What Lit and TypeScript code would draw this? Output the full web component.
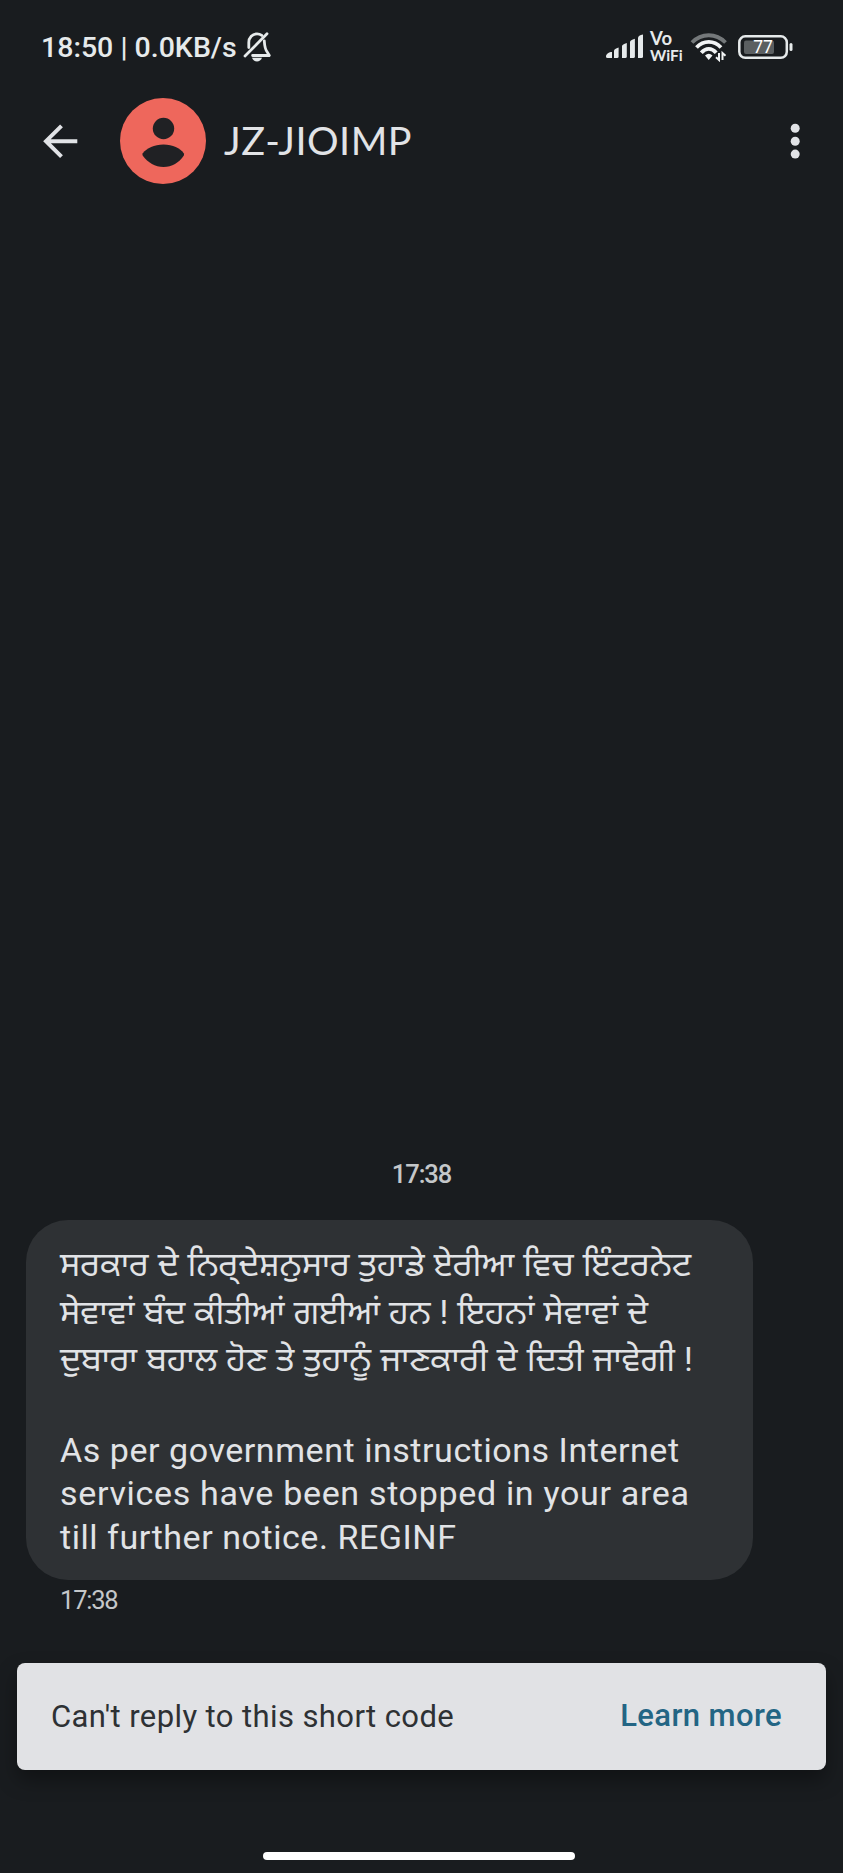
import { LitElement, html, css, svg } from "lit";
import { customElement } from "lit/decorators.js";

@customElement("status-bar")
class StatusBar extends LitElement {
  static styles = css`
    :host {
      display: flex;
      align-items: center;
      height: 94px;
      padding: 0 50px 0 41px;
      box-sizing: border-box;
      font: 500 28.5px/32px Roboto, sans-serif;
      color: #e6eaeb;
      white-space: nowrap;
    }
    .clock { width: 202px; padding-top: 1px; }
    .bell { width: 28px; height: 30px; }
    .icons { margin-left: auto; display: flex; align-items: center; }
    .signal { width: 38px; height: 26px; }
    .vo { margin-left: 6px; width: 34px; font: 700 15.500px/16px Lato, sans-serif; height: 33px; }
    .vo div { height: 17px; }
    .vo .top { font-size: 18.500px; height: 16px; line-height: 14px; }
    .wifi { margin-left: 6px; width: 38px; height: 30px; }
    .battery { margin-left: 10px; width: 55px; height: 26px; }
  `;
  render() {
    return html`
      <div class="clock">18:50 | 0.0KB/s</div>
      <svg class="bell" viewBox="0 0 28 30" fill="none" stroke="#e6eaeb" stroke-width="2.8" stroke-linecap="round">
        <path d="M2 24 24 1.800" />
        <path d="M5.800 15.500V10.500C5.800 5.500 9.500 1.800 14 1.800c1.800 0 3.400.6 4.800 1.600" />
        <path d="M21.300 8.800c.3 5 .3 8 3 11.300l2 3.400H9.600" stroke-linejoin="round" />
        <path d="M9 25.800h10c-1 2.600-2.800 3.700-5 3.700s-4-1.100-5-3.700Z" fill="#e6eaeb" stroke="none" />
      </svg>
      <div class="icons">
        <svg class="signal" viewBox="0 0 38 26" fill="#e6eaeb">
          <path d="M6 18V24H1.500Q0 24 0 22.500C0 20 3 18 6 18Z" />
          <path d="M8 24V16.500Q8.200 14.800 12.600 13.500V22.500Q12.600 24 11.100 24Z" />
          <path d="M16 24V12Q16.200 10.300 20.800 9V22.500Q20.800 24 19.300 24Z" />
          <path d="M24 24V8Q24.200 6 28.900 4.800V22.500Q28.900 24 27.400 24Z" />
          <path d="M32 24V3.800Q32.200 1.500 37 .5V22.500Q37 24 35.500 24Z" />
        </svg>
        <div class="vo"><div class="top">Vo</div><div>WiFi</div></div>
        <svg class="wifi" viewBox="0 0 38 30" fill="none" stroke="#f1f3f4" stroke-width="3.800">
          <path d="M2 10.500C11.500.8 26 .8 35.500 10.500" stroke="#74787a" />
          <path d="M6.500 15.500C13.500 8 24 8 31 15.500" />
          <path d="M11.300 20.800C15.800 15.600 21.700 15.600 26.200 20.800" />
          <path d="M15 23.500q3.700-3.500 7.500 0L18.700 28Z" fill="#f1f3f4" stroke="none" />
          <path d="M29 21v7l-3-2.700M32.500 28v-7l3 2.700" stroke-width="2" />
        </svg>
        <svg class="battery" viewBox="0 0 55 26">
          <rect x="1.300" y="2.300" width="47.500" height="21.500" rx="6" fill="none" stroke="#e6eaeb" stroke-width="2.500" />
          <rect x="6" y="6.500" width="30" height="13.500" rx="2" fill="#5b5f61" />
          <rect x="51.500" y="9" width="3" height="8" rx="1.500" fill="#e6eaeb" />
          <text x="25" y="19.200" text-anchor="middle" font-family="Roboto" font-weight="400" font-size="17.500" fill="#fff">77</text>
        </svg>
      </div>
    `;
  }
}

@customElement("chat-header")
class ChatHeader extends LitElement {
  static styles = css`
    :host {
      display: flex;
      align-items: center;
      height: 94px;
      padding: 0 34px 0 40px;
      box-sizing: border-box;
    }
    .back { width: 40px; height: 40px; }
    .avatar { margin-left: 40px; width: 86px; height: 86px; }
    .name {
      margin-left: 18px;
      padding-bottom: 2px;
      font: 400 39.500px/48px Lato, sans-serif;
      letter-spacing: 0.5px;
      color: #e1e3e6;
      white-space: nowrap;
    }
    .more { margin-left: auto; width: 28px; height: 40px; }
  `;
  render() {
    return html`
      <svg class="back" viewBox="0 0 40 40" fill="none" stroke="#e1e3e6" stroke-width="4">
        <path d="M37.300 20.200H6M21.500 4.800 6 20.200 21.500 35.600" />
      </svg>
      <svg class="avatar" viewBox="0 0 86 86">
        <circle cx="43" cy="43" r="43" fill="#ee675c" />
        <circle cx="43.500" cy="30.500" r="10.700" fill="#202124" />
        <path d="M43.500 46.500C53 46.500 60 50 63.700 55.200Q64.500 56.500 63.700 57.800C59 64.800 52 69 43.500 69S28 64.800 22.800 57.800Q22 56.500 22.800 55.200C27 50 34 46.500 43.500 46.500Z" fill="#202124" />
      </svg>
      <div class="name">JZ-JIOIMP</div>
      <svg class="more" viewBox="0 0 28 40" fill="#e1e3e6">
        ${[7.3, 20.2, 33.1].map((y) => svg`<circle cx="14.200" cy=${y} r="4.500" />`)}
      </svg>
    `;
  }
}

@customElement("message-bubble")
class MessageBubble extends LitElement {
  static styles = css`
    :host { display: block; padding: 0 90px 0 26px; }
    .bubble {
      height: 360px;
      box-sizing: border-box;
      padding: 21px 0 0 34px;
      border-radius: 42px;
      background: #2e3134;
      color: #e1e3e6;
      white-space: nowrap;
    }
    .pa {
      font: 400 34px/47.700px Roboto, "Noto Sans Gurmukhi", "Noto Sans", sans-serif;
      word-spacing: 0.5px;
      height: 143px;
    }
    .pa div { height: 47.700px; }
    .en { margin-top: 44.700px; font: 400 34px/43.700px Roboto, sans-serif; letter-spacing: 0.55px; }
    .en .wide { letter-spacing: 0.68px; }
    .time {
      padding: 3px 0 0 34px;
      font: 400 25.500px/34px Roboto, sans-serif;
      letter-spacing: -1.200px;
      color: #c4c7c9;
    }
  `;
  render() {
    return html`
      <div class="bubble">
        <div class="pa">
          <div>ਸਰਕਾਰ ਦੇ ਨਿਰ੍ਦੇਸ਼ਨੁਸਾਰ ਤੁਹਾਡੇ ਏਰੀਆ ਵਿਚ ਇੰਟਰਨੇਟ</div>
          <div>ਸੇਵਾਵਾਂ ਬੰਦ ਕੀਤੀਆਂ ਗਈਆਂ ਹਨ ! ਇਹਨਾਂ ਸੇਵਾਵਾਂ ਦੇ</div>
          <div>ਦੁਬਾਰਾ ਬਹਾਲ ਹੋਣ ਤੇ ਤੁਹਾਨੂੰ ਜਾਣਕਾਰੀ ਦੇ ਦਿਤੀ ਜਾਵੇਗੀ !</div>
        </div>
        <div class="en">
          <div>As per government instructions Internet</div>
          <div class="wide">services have been stopped in your area</div>
          <div>till further notice. REGINF</div>
        </div>
      </div>
      <div class="time">17:38</div>
    `;
  }
}

@customElement("app-root")
class AppRoot extends LitElement {
  static styles = css`
    :host {
      display: flex;
      flex-direction: column;
      width: 843px;
      height: 1873px;
      background: #191c1f;
      overflow: hidden;
    }
    .thread { flex: 1; display: flex; flex-direction: column; justify-content: flex-end; }
    .stamp {
      text-align: center;
      font: 500 25.500px/34px Roboto, sans-serif;
      letter-spacing: -1px;
      color: #c4c7c9;
      margin-bottom: 29px;
    }
    .notice {
      margin: 46px 17px 0;
      height: 107px;
      box-sizing: border-box;
      padding: 0 44px 0 34px;
      border-radius: 8px;
      background: #e1e2e5;
      box-shadow: 0 10px 20px rgba(0, 0, 0, 0.35);
      display: flex;
      justify-content: space-between;
      align-items: center;
      font: 400 31px/40px Roboto, sans-serif;
      letter-spacing: 0.4px;
      color: #2e3134;
      white-space: nowrap;
    }
    .reply { padding-top: 1px; }
    .learn { font-weight: 500; color: #236584; padding-bottom: 2px; }
    .home { height: 8px; width: 312px; border-radius: 4px; background: #fff; margin: 82px 0 13px 263px; }
  `;
  render() {
    return html`
      <status-bar></status-bar>
      <chat-header></chat-header>
      <div class="thread">
        <div class="stamp">17:38</div>
        <message-bubble></message-bubble>
        <div class="notice">
          <span class="reply">Can't reply to this short code</span>
          <span class="learn">Learn more</span>
        </div>
      </div>
      <div class="home"></div>
    `;
  }
}
